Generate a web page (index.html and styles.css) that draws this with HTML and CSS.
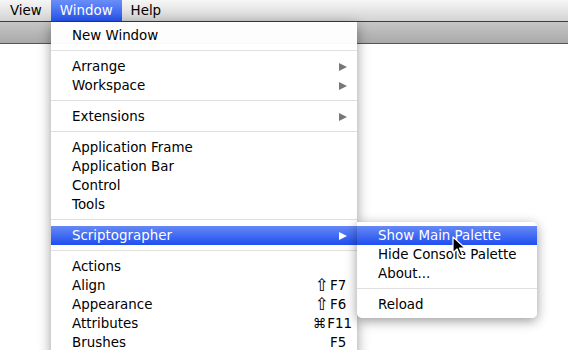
FILE: index.html
```html
<!DOCTYPE html>
<html lang="en">
<head>
  <meta charset="UTF-8">
  <title>Window Menu</title>
  <link rel="stylesheet" href="styles.css">
</head>
<body>

<div class="screen">
  <!-- Menu bar -->
  <div class="menubar">
    <span class="bar-item">View</span>
    <span class="bar-item active">Window</span>
    <span class="bar-item">Help</span>
  </div>
  <div class="toolbar"></div>

  <!-- Window menu dropdown -->
  <div class="menu">
    <div class="item">New Window</div>
    <div class="sep"></div>
    <div class="item">Arrange <span class="arrow"></span></div>
    <div class="item">Workspace <span class="arrow"></span></div>
    <div class="sep"></div>
    <div class="item">Extensions <span class="arrow"></span></div>
    <div class="sep"></div>
    <div class="item">Application Frame</div>
    <div class="item">Application Bar</div>
    <div class="item">Control</div>
    <div class="item">Tools</div>
    <div class="sep"></div>
    <div class="item selected">Scriptographer <span class="arrow"></span>
      <div class="submenu">
        <div class="item selected">Show Main Palette</div>
        <div class="item">Hide Console Palette</div>
        <div class="item">About...</div>
        <div class="sep"></div>
        <div class="item">Reload</div>
      </div>
    </div>
    <div class="sep"></div>
    <div class="item">Actions</div>
    <div class="item">Align <span class="keys"><span class="mod shift">&#8679;</span><span class="key">F7</span></span></div>
    <div class="item">Appearance <span class="keys"><span class="mod shift">&#8679;</span><span class="key">F6</span></span></div>
    <div class="item">Attributes <span class="keys"><span class="mod">&#8984;</span><span class="key">F11</span></span></div>
    <div class="item">Brushes <span class="keys"><span class="mod"></span><span class="key">F5</span></span></div>
  </div>

  <!-- Mouse pointer -->
  <svg class="cursor" width="14" height="22" viewBox="0 0 14 22">
    <path d="M1 1 L1 17 L5 13 L8 20 L10.5 19 L7.5 12 L13 12 Z" fill="#000" stroke="#fff" stroke-width="1.2" stroke-linejoin="round"/>
  </svg>
</div>

</body>
</html>
```

FILE: styles.css
```css
/* Snow Leopard style menu */
body {
  margin: 0;
  padding: 0;
  background-color: #fff;
  font-family: "DejaVu Sans", "Liberation Sans", sans-serif;
  font-size: 13.4px;
  color: #000;
}
.screen {
  position: relative;
  width: 568px;
  height: 350px;
  overflow: hidden;
}
.menubar {
  display: flex;
  height: 21px;
  padding-left: 1px;
  background: linear-gradient(#f6f6f6, #d3d3d3);
  border-bottom: 1px solid #3c3c3c;
}
.bar-item {
  padding: 0 9px;
  line-height: 21px;
}
.bar-item.active {
  color: #fff;
  background: linear-gradient(#6a8ef7, #2655f0);
}
.toolbar {
  height: 21px;
  background: linear-gradient(#c6c6c6, #a9a9a9);
  border-bottom: 1px solid #555;
}
.menu {
  position: absolute;
  left: 51px;
  top: 22px;
  width: 306px;
  padding-top: 4px;
  height: 340px;
  background-color: rgba(255, 255, 255, 0.97);
  box-shadow: 0 3px 12px rgba(0, 0, 0, 0.4);
}
.item {
  position: relative;
  display: flex;
  align-items: center;
  height: 19px;
  line-height: 19px;
  padding: 0 10px 0 21px;
  white-space: nowrap;
}
.item.selected {
  color: #fff;
  background: linear-gradient(#6689f6, #1f4ef0);
}
.sep {
  height: 1px;
  margin: 5px 0 6px;
  background-color: #e0e0e0;
}
.arrow {
  margin-left: auto;
  width: 0;
  height: 0;
  border-top: 4.5px solid transparent;
  border-bottom: 4.5px solid transparent;
  border-left: 8px solid #777;
}
.selected > .arrow {
  border-left-color: #fff;
}
.keys {
  display: flex;
  margin-left: auto;
  width: 43px;
  margin-right: -5px;
}
.mod {
  width: 20px;
  text-align: right;
  padding-right: 1px;
}
.mod.shift {
  font-size: 17px;
}
.key {
  flex: 1;
}
.submenu {
  position: absolute;
  left: 306px;
  top: -4px;
  width: 180px;
  padding: 4px 0;
  color: #000;
  background-color: rgba(255, 255, 255, 0.98);
  border-radius: 0 5px 5px 5px;
  box-shadow: 0 3px 12px rgba(0, 0, 0, 0.4);
}
.submenu .item {
  padding-left: 21px;
}
.cursor {
  position: absolute;
  left: 452px;
  top: 236px;
}
```
